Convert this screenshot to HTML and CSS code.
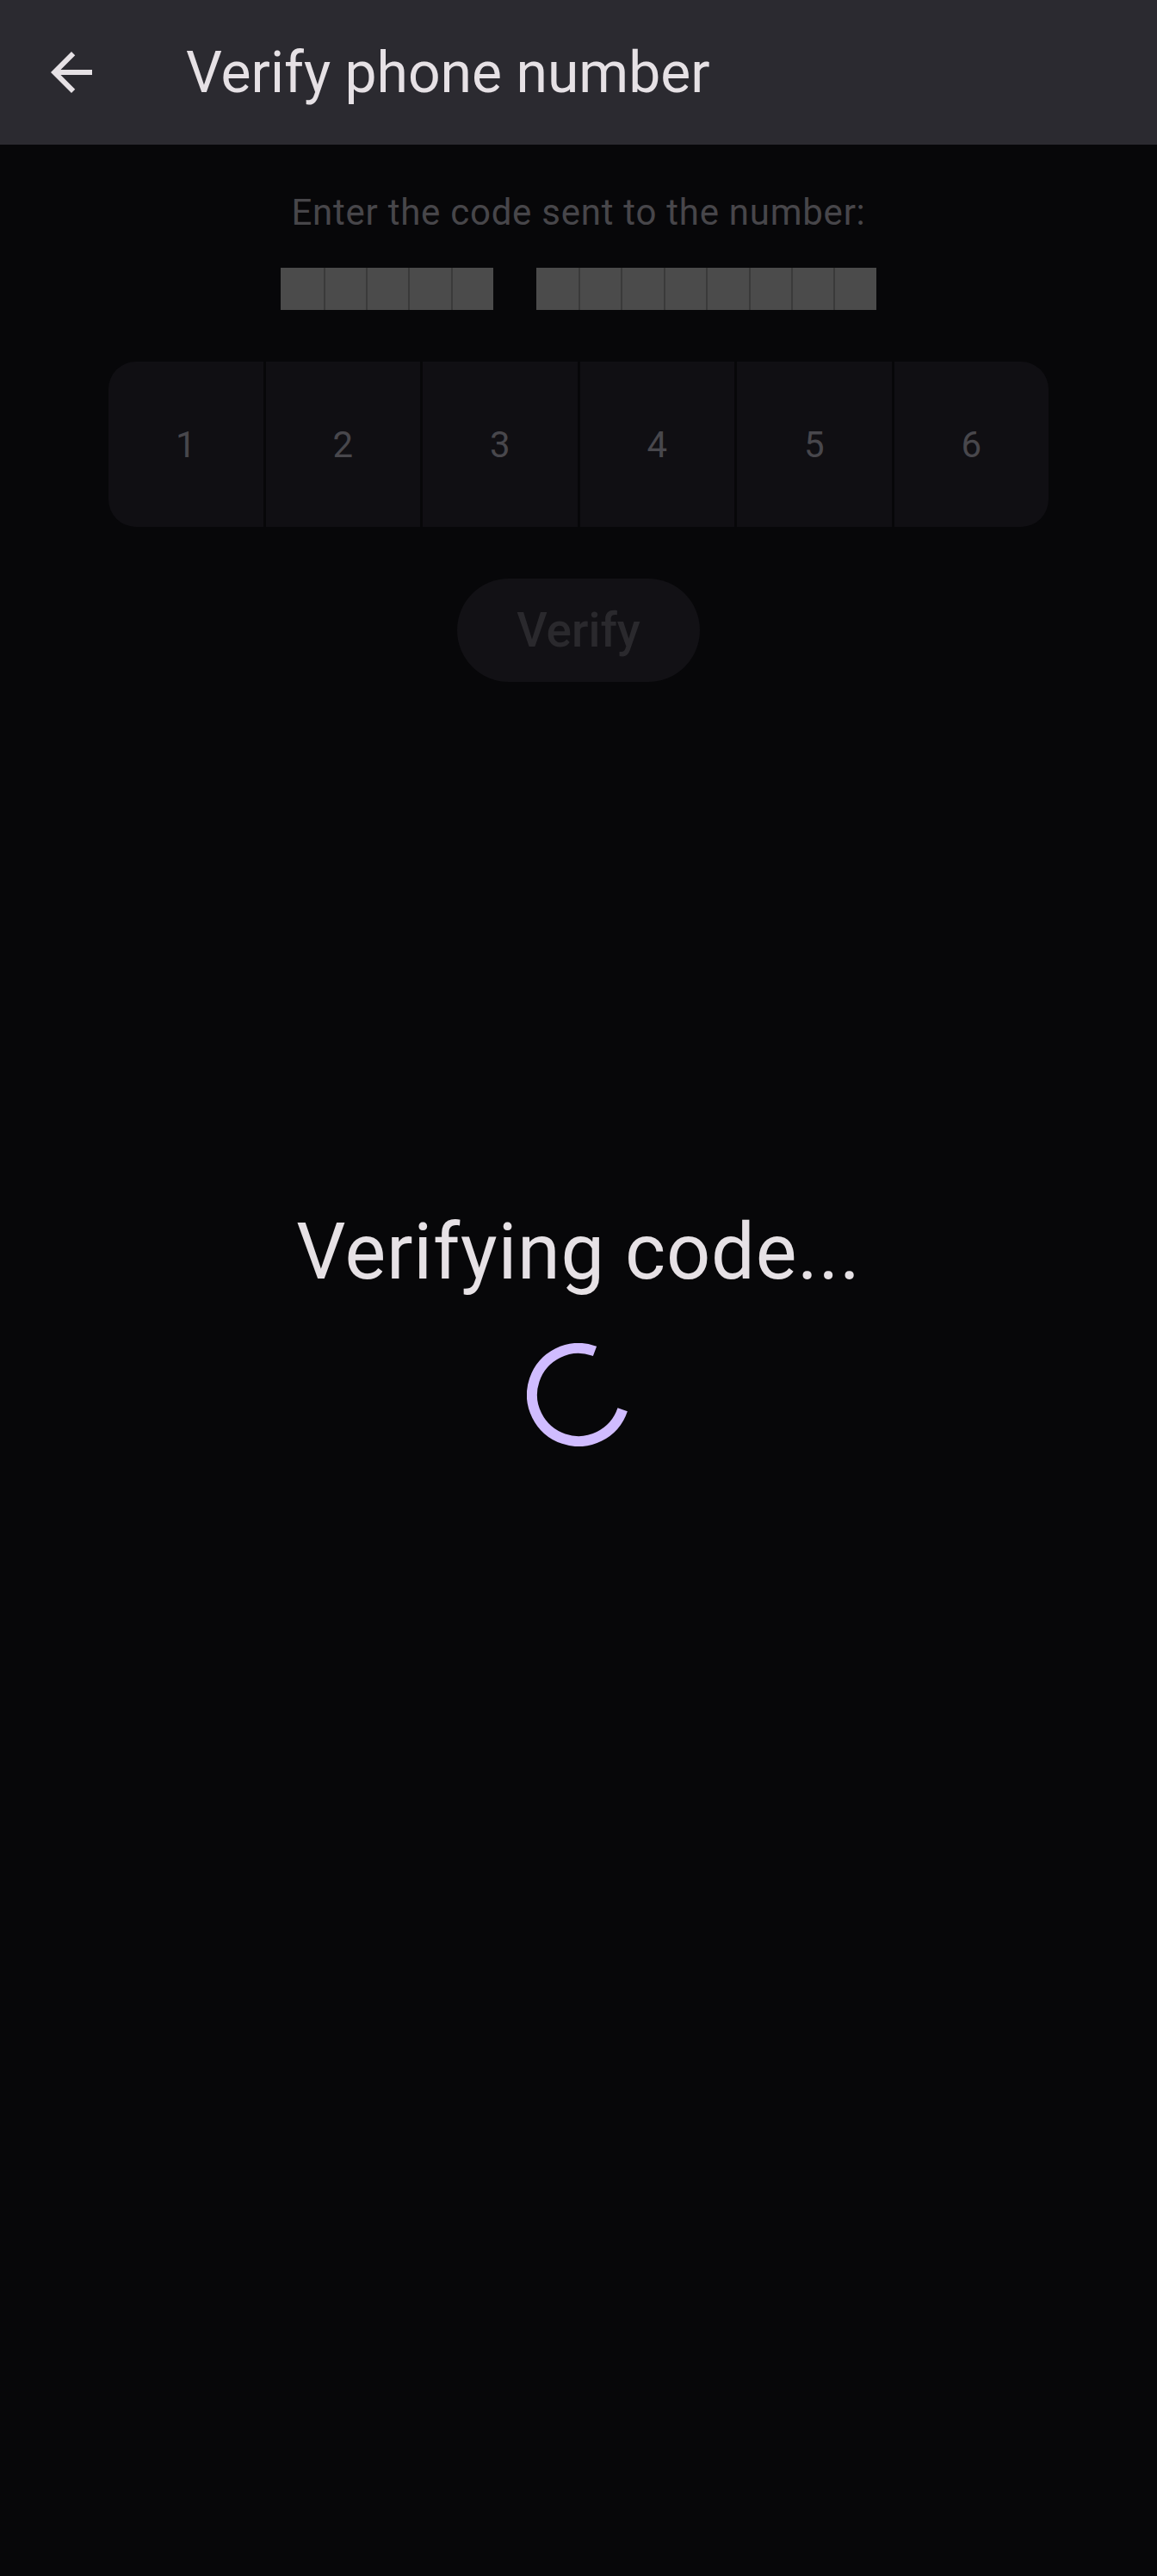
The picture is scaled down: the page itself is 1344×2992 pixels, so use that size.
FILE: index.html
```html
<!DOCTYPE html>
<html lang="en">
<head>
<meta charset="utf-8">
<title>Verify phone number</title>
<link rel="stylesheet" href="styles.css">
</head>
<body>
<header class="appbar">
  <button class="back" aria-label="Back">
    <svg viewBox="0 0 24 24" width="72" height="72"><path d="M20 11H7.83l5.59-5.59L12 4l-8 8 8 8 1.41-1.41L7.83 13H20v-2z" fill="#e6e1e5"/></svg>
  </button>
  <h1 class="title">Verify phone number</h1>
</header>
<main class="content">
  <p class="prompt">Enter the code sent to the number:</p>
  <div class="redacted">
    <span class="blk"></span><span class="blk"></span><span class="blk"></span><span class="blk"></span><span class="blk"></span>
    <span class="space"></span>
    <span class="blk"></span><span class="blk"></span><span class="blk"></span><span class="blk"></span><span class="blk"></span><span class="blk"></span><span class="blk"></span><span class="blk"></span>
  </div>
  <div class="code">
    <div class="cell">1</div>
    <div class="cell">2</div>
    <div class="cell">3</div>
    <div class="cell">4</div>
    <div class="cell">5</div>
    <div class="cell">6</div>
  </div>
  <div class="actions">
    <button class="verify" disabled>Verify</button>
  </div>
  <section class="loading">
    <p class="loading-text">Verifying code...</p>
    <svg class="spinner" viewBox="0 0 120 120" width="120" height="120">
      <circle cx="60" cy="60" r="54" fill="none" stroke="#d0bcff" stroke-width="12" stroke-dasharray="256 400" transform="rotate(18.6 60 60)"/>
    </svg>
  </section>
</main>
</body>
</html>
```

FILE: styles.css
```css
html, body {
  margin: 0;
  padding: 0;
}
body {
  background: #070709;
  font-family: Roboto, "Noto Sans", "Liberation Sans", sans-serif;
  color: #e6e1e5;
  min-height: 2992px;
  overflow-x: hidden;
}
.appbar {
  height: 168px;
  background: #2b2a30;
  display: flex;
  align-items: center;
}
.back {
  margin-left: 47px;
  width: 72px;
  height: 72px;
  padding: 0;
  border: 0;
  background: none;
  display: flex;
}
.title {
  margin: 0 0 0 97px;
  font-size: 66px;
  font-weight: 400;
  line-height: 77px;
  color: #e6e1e5;
}
.content {
  display: flex;
  flex-direction: column;
  align-items: center;
}
.prompt {
  margin: 54px 0 0;
  font-size: 42px;
  line-height: 49px;
  letter-spacing: 0.75px;
  color: #47464a;
}
.redacted {
  margin-top: 40px;
  display: flex;
  height: 49px;
}
.blk {
  width: 49.4px;
  height: 49px;
  background: #4b4b4b;
  box-sizing: border-box;
}
.blk + .blk {
  border-left: 2px solid #3a3a3a;
}
.space {
  width: 49.4px;
}
.code {
  margin-top: 60px;
  width: 1092px;
  height: 192px;
  display: grid;
  grid-template-columns: repeat(6, 1fr);
  column-gap: 3px;
  border-radius: 32px;
  overflow: hidden;
}
.cell {
  background: #100f13;
  display: flex;
  align-items: center;
  justify-content: center;
  font-size: 42px;
  color: #48474c;
}
.actions {
  margin-top: 60px;
}
.verify {
  width: 282px;
  height: 120px;
  border: 0;
  border-radius: 60px;
  background: #121115;
  color: #2a292d;
  font-family: Roboto, "Noto Sans", "Liberation Sans", sans-serif;
  font-size: 55px;
  font-weight: 500;
  padding: 0;
}
.loading {
  margin-top: 610px;
  display: flex;
  flex-direction: column;
  align-items: center;
}
.loading-text {
  margin: 0;
  font-size: 90px;
  line-height: 105px;
  letter-spacing: 0.8px;
  color: #e6e1e5;
}
.spinner {
  margin-top: 53px;
  display: block;
}
```
